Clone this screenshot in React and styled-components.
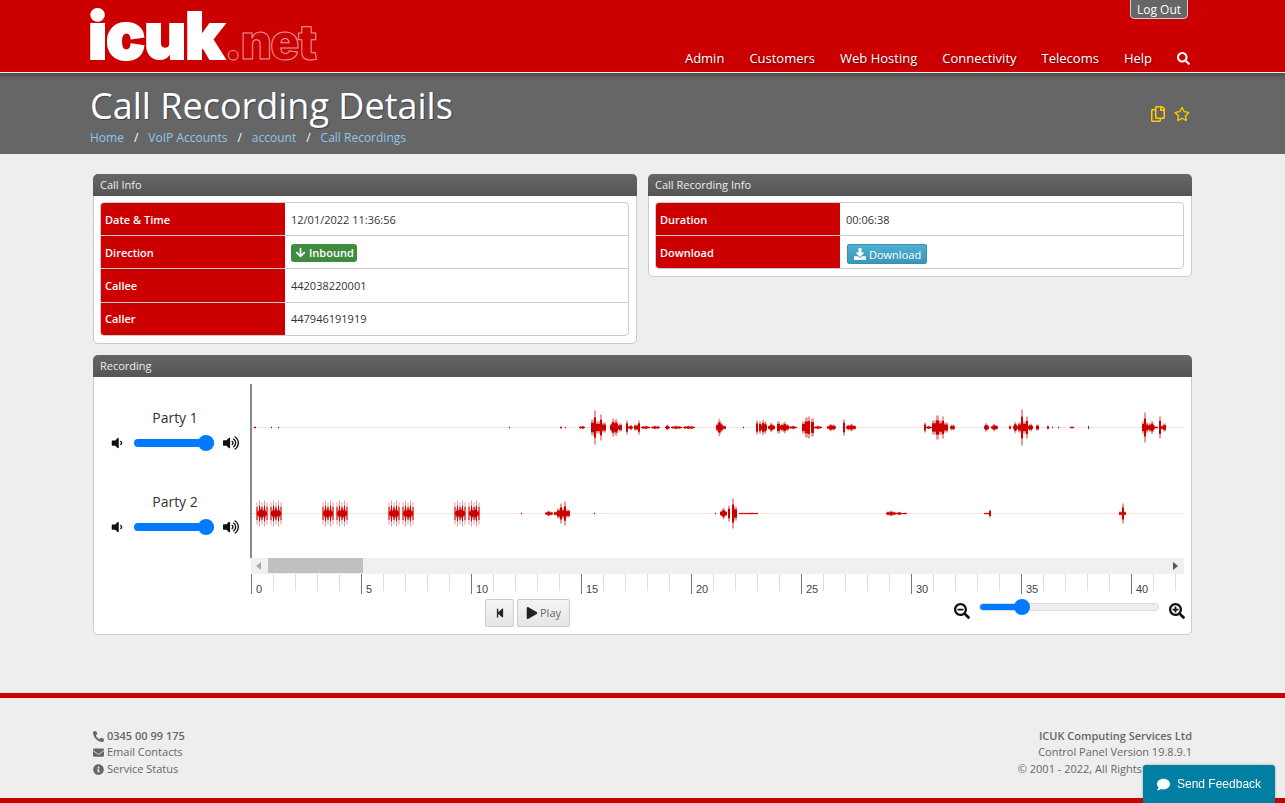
import React from "react";
import styled, { createGlobalStyle } from "styled-components";
import {
  FaArrowDown, FaComment, FaDownload, FaEnvelope, FaInfoCircle, FaPhone, FaPlay, FaRegCopy, FaRegStar,
  FaSearch, FaSearchMinus, FaSearchPlus, FaStepBackward, FaVolumeDown, FaVolumeUp,
} from "react-icons/fa";

const Global = createGlobalStyle`
  html, body { margin: 0; padding: 0; height: 100%; overflow: hidden; }
  body { background: #eee; font-family: "Open Sans", sans-serif; font-size: 11px; color: #333; }
`;

const Header = styled.header`
  height: 72px;
  background: #c00;
  border-bottom: 1px solid #eee;
`;
const HeaderInner = styled.div`
  width: 1100px;
  margin-left: 90px;
  height: 100%;
  position: relative;
  display: flex;
  justify-content: space-between;
`;
const Logo = styled.div`
  display: flex;
  align-items: baseline;
  margin-left: -2px;
  line-height: 72px;
  font-family: "Inter", "Liberation Sans", sans-serif;
  font-weight: 900;
  color: #fff;
`;
const LogoMain = styled.span`
  font-size: 65px;
  letter-spacing: -1.2px;
  -webkit-text-stroke: 2px #fff;
`;
const LogoTail = styled.span`
  font-size: 48px;
  letter-spacing: -1.5px;
  margin-left: 1px;
  color: transparent;
  -webkit-text-stroke: 1px rgba(255, 255, 255, 0.6);
`;
const LogOut = styled.a`
  position: absolute;
  top: -1px;
  right: 2px;
  width: 58px;
  height: 20px;
  box-sizing: border-box;
  background: #666;
  border: 1px solid #ccc;
  border-radius: 0 0 4px 4px;
  color: #fff;
  font-size: 12px;
  line-height: 19px;
  text-align: center;
`;
const Nav = styled.nav`
  display: flex;
  align-items: center;
  gap: 25px;
  height: 30px;
  margin-top: 43px;
  color: #fff;
  font-size: 13px;
  text-shadow: 1px 1px 2px rgba(0, 0, 0, 0.5);
`;
const Band = styled.div`
  height: 81px;
  background: #666;
  box-shadow: inset 0 6px 6px -5px rgba(0, 0, 0, 0.4);
`;
const BandInner = styled.div`
  width: 1100px;
  margin-left: 90px;
  position: relative;
`;
const Title = styled.h1`
  margin: 0;
  padding-top: 9px;
  font-size: 36px;
  line-height: 48px;
  font-weight: 400;
  color: #fff;
  text-shadow: 1px 1px 1px #345;
`;
const Crumbs = styled.div`
  display: flex;
  gap: 10px;
  font-size: 12px;
  line-height: 18px;
  margin-top: -1px;
  color: #fff;
  a { color: #8cc8ee; }
`;
const BandIcons = styled.div`
  position: absolute;
  right: 0;
  top: 33px;
  display: flex;
  gap: 8px;
  color: #fc0;
  font-size: 16px;
`;
const Main = styled.main`
  width: 1099px;
  margin-left: 93px;
  padding-top: 20px;
`;
const Row = styled.div`
  display: flex;
  align-items: flex-start;
  gap: 11px;
  margin-bottom: 11px;
`;
const Panel = styled.section`
  flex: 1;
  background: #fff;
  border: 1px solid #ccc;
  border-radius: 5px;
`;
const PanelHead = styled.div`
  height: 22px;
  margin: -1px -1px 0;
  padding-left: 7px;
  border-radius: 5px 5px 0 0;
  background: linear-gradient(#666, #555);
  color: #eee;
  font-size: 11px;
  line-height: 22px;
`;
const Table = styled.div`
  margin: 6px 7px 7px 6px;
  border: 1px solid #ccc;
  border-radius: 4px;
  overflow: hidden;
`;
const TableRow = styled.div`
  display: flex;
  height: 32.2px;
  & + & { border-top: 1px solid #ccc; }
`;
const Label = styled.div`
  width: 184px;
  box-sizing: border-box;
  padding-left: 4px;
  background: #c00;
  color: #fff;
  font-weight: 600;
  display: flex;
  align-items: center;
`;
const Cell = styled.div`
  flex: 1;
  padding-left: 6px;
  display: flex;
  align-items: center;
  color: #333;
`;
const Badge = styled.span`
  display: inline-flex;
  align-items: center;
  gap: 3px;
  height: 18px;
  margin-top: 1px;
  padding: 0 3px 0 4px;
  border-radius: 3px;
  background: #3f8b3f;
  color: #fff;
  font-weight: 600;
`;
const DownloadButton = styled.a`
  display: inline-flex;
  align-items: center;
  gap: 3px;
  height: 20px;
  box-sizing: border-box;
  margin: 4px 0 0 1px;
  padding: 0 5px 0 6px;
  border: 1px solid #3a8fb0;
  border-radius: 2px;
  background: linear-gradient(#4cb0d4, #3a97bb);
  color: #fff;
`;
const RecordingBody = styled.div`
  height: 257px;
  box-sizing: border-box;
  padding: 7px 7px 0 0;
`;
const Tracks = styled.div`
  display: flex;
  height: 174px;
`;
const Parties = styled.div`
  width: 157px;
  padding-top: 24px;
  display: flex;
  flex-direction: column;
  gap: 39px;
`;
const Party = styled.div`
  text-align: center;
`;
const PartyName = styled.div`
  font-size: 14px;
  line-height: 20px;
  margin-bottom: 5px;
  padding-left: 6px;
`;
const VolumeRow = styled.div`
  display: flex;
  align-items: center;
  justify-content: space-between;
  padding: 0 11px 0 16px;
  font-size: 16px;
  color: #111;
  height: 20px;
`;
const Range = styled.input`
  -webkit-appearance: none;
  appearance: none;
  margin: 0;
  display: block;
  width: ${(p) => p.$width}px;
  height: 8px;
  border-radius: 4px;
  border: ${(p) => (p.$outlined ? "1px solid #ddd" : "0")};
  box-sizing: border-box;
  background: linear-gradient(to right, #007bff ${(p) => p.$fill}%, #eee ${(p) => p.$fill}%);
  &::-webkit-slider-thumb {
    -webkit-appearance: none;
    width: 16px;
    height: 16px;
    border-radius: 50%;
    background: #007bff;
  }
`;
const Waves = styled.div`
  flex: 1;
  border-left: 2px solid #888;
`;
const Scroller = styled.div`
  margin-left: 157px;
  height: 16px;
  background: #f0f0f0;
  display: flex;
  align-items: center;
  color: #777;
`;
const ScrollThumb = styled.div`
  width: 95px;
  height: 15px;
  background: #c0c0c0;
  margin-left: 7px;
  margin-right: auto;
`;
const Arrow = styled.i`
  width: 0;
  height: 0;
  margin: 0 ${(p) => (p.$left ? "0 0 5px" : "6px 0 0")};
  border-top: 4px solid transparent;
  border-bottom: 4px solid transparent;
  ${(p) => (p.$left ? "border-right: 5px solid #aaa;" : "border-left: 5px solid #555;")}
`;
const RulerWrap = styled.div`
  margin-left: 157px;
`;
const Controls = styled.div`
  display: flex;
  margin-left: 391px;
  padding-top: 5px;
`;
const Buttons = styled.div`
  display: flex;
  gap: 3px;
`;
const Control = styled.button`
  height: 28px;
  box-sizing: border-box;
  padding: 0 ${(p) => p.$pad}px;
  display: flex;
  align-items: center;
  gap: 2px;
  border: 1px solid #ccc;
  border-radius: 2px;
  background: linear-gradient(#f4f4f4, #e6e6e6);
  color: #666;
  font: 11px "Open Sans", sans-serif;
  svg { color: #222; }
`;
const Zoom = styled.div`
  margin-left: auto;
  margin-right: -1px;
  width: 231px;
  display: flex;
  justify-content: space-between;
  color: #111;
  font-size: 16px;
  padding-top: 3px;
`;
const ZoomIcon = styled.span`
  display: block;
  height: 16px;
`;
const ZoomSlider = styled.div`
  margin: 1px 0 0 -2px;
`;
const Footer = styled.footer`
  margin-top: 58px;
  height: 110px;
  box-sizing: border-box;
  border-top: 5px solid #c00;
  border-bottom: 5px solid #c00;
  padding: 30px 93px 0;
  display: flex;
  justify-content: space-between;
  color: #666;
  font-size: 11px;
  line-height: 16.5px;
`;
const FooterLine = styled.div`
  display: flex;
  align-items: center;
  justify-content: ${(p) => (p.$right ? "flex-end" : "flex-start")};
  gap: 3px;
  font-weight: ${(p) => (p.$strong ? 600 : 400)};
`;
const PhoneIcon = styled(FaPhone)`
  transform: scaleX(-1);
`;
const Feedback = styled.a`
  position: fixed;
  right: 10px;
  bottom: 0;
  width: 132px;
  height: 38px;
  box-sizing: border-box;
  padding-left: 14px;
  display: flex;
  align-items: center;
  gap: 7px;
  border-radius: 3px 3px 0 0;
  background: #007fa3;
  color: #fff;
  font-family: "Liberation Sans", sans-serif;
  font-size: 12px;
  box-shadow: 0 0 3px rgba(0, 0, 0, 0.3);
`;

// [start x, end x, amplitude] in page pixels
const party1 = [
  [255, 256, 1], [272, 272, 1], [279, 279, 1], [510, 510, 1], [561, 562, 1], [566, 566, 1], [580, 585, 2],
  [592, 594, 8], [595, 596, 17], [597, 600, 6], [601, 602, 13], [603, 606, 5], [611, 619, 10], [620, 622, 4],
  [627, 628, 7], [629, 633, 3], [635, 638, 3], [639, 640, 7], [642, 650, 2], [652, 660, 2], [666, 670, 3], [672, 682, 2], [684, 695, 2],
  [717, 723, 9], [724, 726, 2], [744, 744, 1], [757, 758, 7], [760, 761, 6], [762, 767, 9], [769, 775, 5], [778, 780, 6], [781, 789, 6], [790, 797, 2],
  [803, 805, 6], [806, 808, 10], [809, 810, 11], [812, 814, 9], [815, 822, 2], [828, 836, 4], [844, 845, 8], [847, 856, 4],
  [925, 926, 5], [927, 932, 2], [933, 936, 7], [937, 939, 12], [940, 942, 7], [943, 944, 11], [945, 948, 5], [951, 955, 4],
  [985, 989, 5], [992, 998, 4], [1010, 1011, 2], [1014, 1018, 6], [1019, 1021, 5], [1022, 1023, 18], [1024, 1026, 6], [1027, 1028, 11], [1029, 1033, 5],
  [1037, 1039, 3], [1048, 1049, 2], [1053, 1053, 1], [1059, 1059, 1], [1071, 1074, 1], [1089, 1089, 2],
  [1143, 1144, 6], [1145, 1146, 15], [1147, 1148, 5], [1149, 1155, 7], [1156, 1158, 1], [1160, 1161, 11], [1162, 1163, 2], [1164, 1166, 4],
];

// the dial tones in party 2 are pairs of combs, solid at the core with teeth at the tips
const combs = [258, 272, 324, 338, 390, 404, 456, 470].flatMap((x) => [
  ...[0, 2.5, 5, 7.5, 10].map((d) => [x + d - 0.5, x + d - 0.5, d === 2.5 || d === 7.5 ? 13 : 11]),
  [x, x + 9, 7],
]);
const party2 = [
  ...combs,
  [522, 522, 1], [546, 553, 3], [555, 557, 2], [558, 560, 5], [561, 562, 10], [563, 564, 5], [565, 566, 12], [567, 570, 4], [595, 595, 1],
  [716, 716, 1], [721, 727, 6], [729, 730, 8], [733, 734, 15], [735, 737, 7], [740, 745, 1], [746, 758, 1],
  [887, 896, 3], [897, 902, 2], [903, 907, 1], [985, 990, 1], [990, 991, 4], [1120, 1122, 2], [1123, 1124, 10], [1125, 1126, 2],
];

const OFFSET = 253;

function waveColumns(bursts, cy) {
  let strong = "";
  let soft = "";
  bursts.forEach(([from, to, amp], i) => {
    const span = to - from;
    for (let x = from; x <= to; x += 1) {
      // wider bursts taper towards their edges and get an uneven top
      const t = span > 0 ? (x - from) / span : 0.5;
      const taper = span > 3 ? Math.pow(Math.sin(Math.PI * (0.1 + t * 0.8)), 0.7) : 1;
      const jitter = span > 3 ? 0.6 + 0.4 * Math.abs(Math.sin(x * 2.3 + i)) : 1;
      const a = Math.max(amp * taper * jitter, 0.8);
      const px = x - OFFSET + 0.5;
      strong += `M${px} ${cy - a * 0.6}V${cy + a * 0.6}`;
      soft += `M${px} ${cy - a}V${cy + a}`;
    }
  });
  return { strong, soft };
}

function Waveform() {
  const one = waveColumns(party1, 43.5);
  const two = waveColumns(party2, 129.5);
  return (
    <svg width="932" height="174" style={{ display: "block" }}>
      <line x1="0" x2="932" y1="43.5" y2="43.5" stroke="#fbe3e3" />
      <line x1="0" x2="932" y1="129.5" y2="129.5" stroke="#fbe3e3" />
      <path d={one.soft + two.soft} stroke="#ec9a9a" strokeWidth="1" fill="none" />
      <path d={one.strong + two.strong} stroke="#c00" strokeWidth="1" fill="none" />
    </svg>
  );
}

function TimeRuler() {
  const ticks = Array.from({ length: 43 }, (_, i) => i);
  return (
    <svg width="934" height="20" style={{ display: "block", fontFamily: '"Liberation Sans", sans-serif' }}>
      {ticks.map((i) => (
        <line
          key={i}
          x1={i * 22 + 0.5}
          x2={i * 22 + 0.5}
          y1="0"
          y2={i % 5 === 0 ? 20 : 17}
          stroke={i % 5 === 0 ? "#777" : "#ddd"}
        />
      ))}
      {ticks.filter((i) => i % 5 === 0).map((i) => (
        <text key={i} x={i * 22 + 5} y="19" fontSize="11" fill="#444">{i}</text>
      ))}
    </svg>
  );
}

function PartyControl({ name }) {
  return (
    <Party>
      <PartyName>{name}</PartyName>
      <VolumeRow>
        <FaVolumeDown size={14} />
        <Range type="range" min="0" max="100" defaultValue="100" $width={80} $fill={100} />
        <FaVolumeUp />
      </VolumeRow>
    </Party>
  );
}

export default function App() {
  return (
    <>
      <Global />
      <Header>
        <HeaderInner>
          <Logo>
            <LogoMain>icuk</LogoMain>
            <LogoTail>.net</LogoTail>
          </Logo>
          <LogOut>Log Out</LogOut>
          <Nav>
            <span>Admin</span>
            <span>Customers</span>
            <span>Web Hosting</span>
            <span>Connectivity</span>
            <span>Telecoms</span>
            <span>Help</span>
            <FaSearch />
          </Nav>
        </HeaderInner>
      </Header>
      <Band>
        <BandInner>
          <Title>Call Recording Details</Title>
          <Crumbs>
            <a>Home</a><span>/</span><a>VoIP Accounts</a><span>/</span><a>account</a><span>/</span><a>Call Recordings</a>
          </Crumbs>
          <BandIcons>
            <FaRegCopy />
            <FaRegStar />
          </BandIcons>
        </BandInner>
      </Band>
      <Main>
        <Row>
          <Panel>
            <PanelHead>Call Info</PanelHead>
            <Table>
              <TableRow><Label>Date &amp; Time</Label><Cell>12/01/2022 11:36:56</Cell></TableRow>
              <TableRow>
                <Label>Direction</Label>
                <Cell><Badge><FaArrowDown size={11} />Inbound</Badge></Cell>
              </TableRow>
              <TableRow><Label>Callee</Label><Cell>442038220001</Cell></TableRow>
              <TableRow><Label>Caller</Label><Cell>447946191919</Cell></TableRow>
            </Table>
          </Panel>
          <Panel>
            <PanelHead>Call Recording Info</PanelHead>
            <Table>
              <TableRow><Label>Duration</Label><Cell>00:06:38</Cell></TableRow>
              <TableRow>
                <Label>Download</Label>
                <Cell><DownloadButton><FaDownload size={12} />Download</DownloadButton></Cell>
              </TableRow>
            </Table>
          </Panel>
        </Row>
        <Panel>
          <PanelHead>Recording</PanelHead>
          <RecordingBody>
            <Tracks>
              <Parties>
                <PartyControl name="Party 1" />
                <PartyControl name="Party 2" />
              </Parties>
              <Waves><Waveform /></Waves>
            </Tracks>
            <Scroller>
              <Arrow $left />
              <ScrollThumb />
              <Arrow />
            </Scroller>
            <RulerWrap><TimeRuler /></RulerWrap>
            <Controls>
              <Buttons>
                <Control $pad={8.5}><FaStepBackward size={10} /></Control>
                <Control $pad={8}><FaPlay size={12} />Play</Control>
              </Buttons>
              <Zoom>
                <ZoomIcon><FaSearchMinus /></ZoomIcon>
                <ZoomSlider>
                  <Range type="range" min="0" max="100" defaultValue="21" $width={180} $fill={21} $outlined />
                </ZoomSlider>
                <ZoomIcon><FaSearchPlus /></ZoomIcon>
              </Zoom>
            </Controls>
          </RecordingBody>
        </Panel>
      </Main>
      <Footer>
        <div>
          <FooterLine $strong><PhoneIcon size={11} />0345 00 99 175</FooterLine>
          <FooterLine><FaEnvelope size={11} />Email Contacts</FooterLine>
          <FooterLine><FaInfoCircle size={11} />Service Status</FooterLine>
        </div>
        <div>
          <FooterLine $right $strong>ICUK Computing Services Ltd</FooterLine>
          <FooterLine $right>Control Panel Version 19.8.9.1</FooterLine>
          <FooterLine $right>© 2001 - 2022, All Rights Reserved</FooterLine>
        </div>
      </Footer>
      <Feedback><FaComment size={13} />Send Feedback</Feedback>
    </>
  );
}
